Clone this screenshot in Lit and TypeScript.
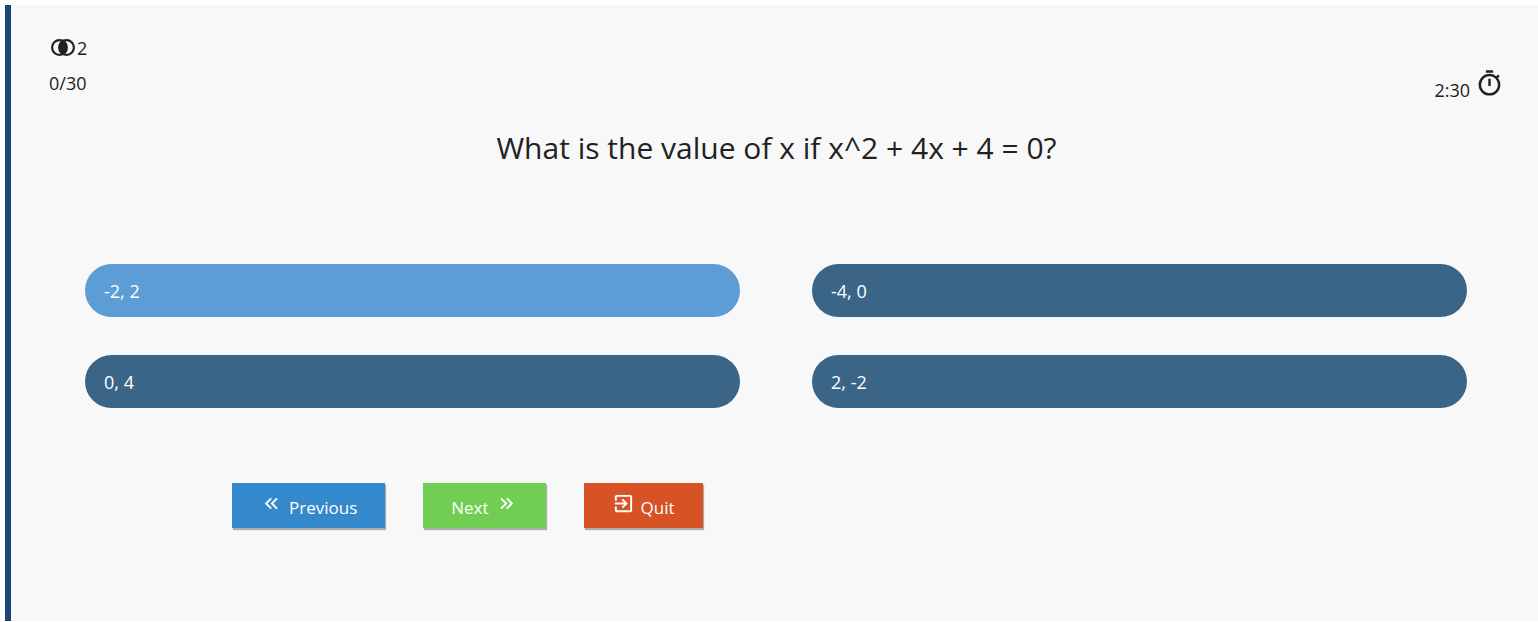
import { LitElement, html, css, svg } from "lit";
import { customElement, property, state } from "lit/decorators.js";
import { classMap } from "lit/directives/class-map.js";

const ICONS = {
  previous: svg`<path d="M18.41 7.41 17 6l-6 6 6 6 1.41-1.41L13.83 12zM12.41 7.41 11 6l-6 6 6 6 1.41-1.41L7.83 12z"/>`,
  next: svg`<path d="M5.59 7.41 7 6l6 6-6 6-1.41-1.41L10.17 12zM11.59 7.41 13 6l6 6-6 6-1.41-1.41L16.17 12z"/>`,
  quit: svg`<path d="M19 3H5a2 2 0 0 0-2 2v4h2V5h14v14H5v-4H3v4a2 2 0 0 0 2 2h14a2 2 0 0 0 2-2V5a2 2 0 0 0-2-2M10.08 15.58 11.5 17l5-5-5-5-1.42 1.41L12.67 11H3v2h9.67z"/>`,
  timer: svg`<path d="M15 1H9v2h6zM11 14h2V8h-2zM19.03 7.39l1.42-1.42c-.43-.51-.9-.99-1.41-1.41l-1.42 1.42A8.96 8.96 0 0 0 12 4a9 9 0 1 0 9 9c0-2.12-.74-4.07-1.97-5.61M12 20a7 7 0 1 1 0-14 7 7 0 0 1 0 14"/>`,
};

interface Question {
  text: string;
  options: string[];
}

const QUESTION: Question = {
  text: "What is the value of x if x^2 + 4x + 4 = 0?",
  options: ["-2, 2", "-4, 0", "0, 4", "2, -2"],
};

@customElement("quiz-status")
class QuizStatus extends LitElement {
  @property({ type: Number }) hints = 0;
  @property() progress = "";
  @property() time = "";

  static styles = css`
    :host {
      display: flex;
      justify-content: space-between;
      align-items: flex-end;
      line-height: 24px;
    }
    .left {
      display: grid;
      gap: 11px;
      padding-bottom: 7px;
    }
    .hints {
      display: flex;
      align-items: center;
      gap: 2px;
      padding-left: 2px;
    }
    .time {
      display: flex;
      align-items: flex-start;
      gap: 5px;
    }
    .value {
      padding-top: 9px;
    }
    svg {
      display: block;
      fill: currentColor;
    }
    .rings {
      width: 24px;
      height: 18px;
    }
    .timer {
      width: 29px;
      height: 29px;
    }
  `;

  render() {
    return html`
      <div class="left">
        <div class="hints">
          <svg class="rings" viewBox="0 0 24 18" aria-hidden="true">
            <g fill="none" stroke="currentColor" stroke-width="2.2">
              <circle cx="8.5" cy="8.5" r="7.4" />
              <circle cx="15.5" cy="8.5" r="7.4" />
            </g>
            <path d="M12 1.9a7.5 7.5 0 0 1 0 13.2 7.5 7.5 0 0 1 0-13.2" />
          </svg>
          <span>${this.hints}</span>
        </div>
        <div>${this.progress}</div>
      </div>
      <div class="time">
        <span class="value">${this.time}</span>
        <svg class="timer" viewBox="0 0 24 24" aria-hidden="true">${ICONS.timer}</svg>
      </div>
    `;
  }
}

@customElement("app-root")
class AppRoot extends LitElement {
  @state() private selected = 0;

  static styles = css`
    :host {
      display: flex;
      box-sizing: border-box;
      min-height: 100vh;
      padding: 5px 0 1px 5px;
      background: #fff;
      color: #212121;
      font: 400 18px/24px "Open Sans", "Noto Sans", sans-serif;
    }
    main {
      flex: 1;
      box-sizing: border-box;
      padding: 31px 34px 32px 38px;
      border-left: 6px solid #1a4678;
      background: #f8f8f8;
    }
    h1 {
      margin: 26px 0 0;
      text-align: center;
      font-size: 30px;
      font-weight: 400;
      line-height: 40px;
    }
    .options {
      display: grid;
      grid-template-columns: 1fr 1fr;
      gap: 38px 72px;
      margin: 96px 37px 0 36px;
    }
    button {
      border: 0;
      color: #fff;
      font: inherit;
      cursor: pointer;
    }
    .option {
      height: 53px;
      padding: 0 19px;
      border-radius: 27px;
      background: #3a6587;
      text-align: left;
    }
    .selected {
      background: #5d9dd5;
    }
    .actions {
      display: flex;
      gap: 38px;
      margin: 75px 0 0 183px;
    }
    .action {
      display: flex;
      align-items: flex-start;
      gap: 6px;
      height: 45px;
      padding: 9px 28px 0;
      box-shadow: 1px 2px 1px rgba(0, 0, 0, 0.3);
      font-size: 17px;
    }
    .action span {
      padding-top: 4px;
    }
    .action svg {
      width: 23px;
      height: 23px;
      fill: currentColor;
    }
    .previous {
      background: #3488cc;
    }
    .next {
      background: #70cf52;
    }
    .quit {
      background: #d75326;
    }
  `;

  render() {
    return html`
      <main>
        <quiz-status .hints=${2} progress="0/30" time="2:30"></quiz-status>
        <h1>${QUESTION.text}</h1>
        <div class="options">
          ${QUESTION.options.map(
            (option, i) => html`<button
              type="button"
              class=${classMap({ option: true, selected: i === this.selected })}
              aria-pressed=${i === this.selected}
              @click=${() => (this.selected = i)}
            >${option}</button>`
          )}
        </div>
        <div class="actions">
          <button type="button" class="action previous">
            <svg viewBox="0 0 24 24" aria-hidden="true">${ICONS.previous}</svg>
            <span>Previous</span>
          </button>
          <button type="button" class="action next">
            <span>Next</span>
            <svg viewBox="0 0 24 24" aria-hidden="true">${ICONS.next}</svg>
          </button>
          <button type="button" class="action quit">
            <svg viewBox="0 0 24 24" aria-hidden="true">${ICONS.quit}</svg>
            <span>Quit</span>
          </button>
        </div>
      </main>
    `;
  }
}
